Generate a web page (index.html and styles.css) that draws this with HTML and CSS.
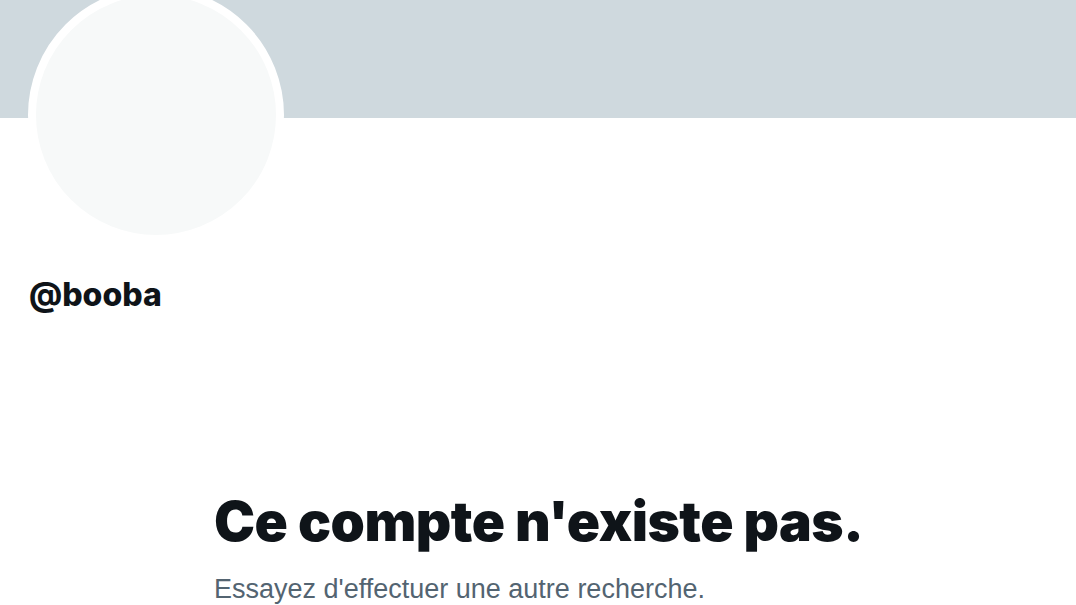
FILE: index.html
```html
<!DOCTYPE html>
<html lang="fr">
<head>
    <meta charset="UTF-8">
    <meta name="viewport" content="width=device-width, initial-scale=1.0">
    <title>@booba</title>
    <link rel="stylesheet" href="styles.css">
</head>
<body>
    <div class="banner"></div>
    <div class="profile">
        <div class="avatar"></div>
        <div class="handle">@booba</div>
    </div>
    <div class="empty">
        <h1 class="empty-title">Ce compte n'existe pas.</h1>
        <p class="empty-text">Essayez d'effectuer une autre recherche.</p>
    </div>
</body>
</html>
```

FILE: styles.css
```css
body {
    margin: 0;
    background: #ffffff;
    font-family: "Liberation Sans", Arial, sans-serif;
    color: #0f1419;
    overflow: hidden;
}
.banner {
    height: 118px;
    background: #cfd9de;
}
.profile {
    padding: 0 28px;
}
.avatar {
    width: 240px;
    height: 240px;
    margin-top: -131px;
    border-radius: 50%;
    background: #f7f9f9;
    border: 8px solid #ffffff;
    box-sizing: content-box;
}
.handle {
    margin-top: 32px;
    padding-left: 1px;
    font-family: Inter, "Liberation Sans", sans-serif;
    font-size: 32px;
    font-weight: 800;
    line-height: 40px;
}
.empty {
    max-width: 648px;
    margin: 174px auto 0;
    white-space: nowrap;
}
.empty-title {
    margin: 0;
    font-family: Inter, "Liberation Sans", sans-serif;
    font-size: 55px;
    font-weight: 900;
    letter-spacing: -0.5px;
    line-height: 64px;
}
.empty-text {
    margin: 20px 0 0;
    font-size: 27px;
    line-height: 32px;
    color: #536471;
}
```
